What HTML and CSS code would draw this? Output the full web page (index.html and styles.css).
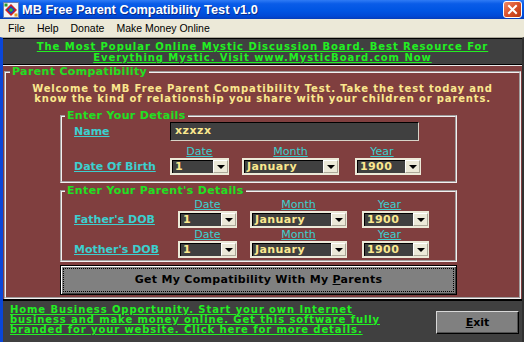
FILE: index.html
```html
<!DOCTYPE html>
<html lang="en">
    <head>
        <meta charset="UTF-8" />
        <title>MB Free Parent Compatibility Test v1.0</title>
        <link rel="stylesheet" href="styles.css">
    </head>

    <body>
        <div class="window">
            <!-- title bar -->
            <div class="titlebar">
                <svg class="app-icon" width="16" height="16" viewBox="0 0 16 16">
                    <rect x="0.5" y="0.5" width="15" height="15" fill="#f4f4f4" stroke="#6a7fb0" />
                    <path d="M8 2 L14 8 L8 14 L2 8 Z" fill="#d02020" />
                    <path d="M8 4 L12 8 L8 12 L4 8 Z" fill="#1a3fc0" />
                    <circle cx="8" cy="8" r="1.8" fill="#30c030" />
                    <rect x="1.5" y="1.5" width="3" height="3" fill="#2a9a2a" />
                    <rect x="11.5" y="11.5" width="3" height="3" fill="#e0a020" />
                </svg>
                <span class="title">MB Free Parent Compatibility Test v1.0</span>
                <span class="close-btn">
                    <svg width="11" height="11" viewBox="0 0 11 11">
                        <path d="M2 2 L9 9 M9 2 L2 9" stroke="#fff" stroke-width="2" stroke-linecap="square" />
                    </svg>
                </span>
            </div>

            <!-- menu -->
            <div class="menubar">
                <span>File</span>
                <span>Help</span>
                <span>Donate</span>
                <span>Make Money Online</span>
            </div>

            <div class="client">
                <div class="banner">
                    <span class="link">The Most Popular Online Mystic Discussion Board. Best Resource For<br />Everything Mystic. Visit www.MysticBoard.com Now</span>
                </div>

                <div class="main">
                    <fieldset class="group outer">
                        <legend>Parent Compatibility</legend>
                        <p class="welcome">
                            Welcome to MB Free Parent Compatibility Test. Take the test today and<br />
                            know the kind of relationship you share with your children or parents.
                        </p>

                        <fieldset class="group inner">
                            <legend>Enter Your Details</legend>
                            <div class="row">
                                <span class="label own">Name</span>
                                <div class="textbox">xzxzx</div>
                            </div>
                            <div class="row heads">
                                <span class="label own"></span>
                                <span class="head c-date">Date</span>
                                <span class="head c-month">Month</span>
                                <span class="head c-year">Year</span>
                            </div>
                            <div class="row">
                                <span class="label own">Date Of Birth</span>
                                <div class="combo c-date"><span>1</span><i></i></div>
                                <div class="combo c-month"><span>January</span><i></i></div>
                                <div class="combo c-year"><span>1900</span><i></i></div>
                            </div>
                        </fieldset>

                        <fieldset class="group inner parents">
                            <legend>Enter Your Parent's Details</legend>
                            <div class="row heads">
                                <span class="label par"></span>
                                <span class="head c-date">Date</span>
                                <span class="head c-month">Month</span>
                                <span class="head c-year">Year</span>
                            </div>
                            <div class="row">
                                <span class="label par">Father's DOB</span>
                                <div class="combo c-date"><span>1</span><i></i></div>
                                <div class="combo c-month"><span>January</span><i></i></div>
                                <div class="combo c-year"><span>1900</span><i></i></div>
                            </div>
                            <div class="row heads">
                                <span class="label par"></span>
                                <span class="head c-date">Date</span>
                                <span class="head c-month">Month</span>
                                <span class="head c-year">Year</span>
                            </div>
                            <div class="row">
                                <span class="label par">Mother's DOB</span>
                                <div class="combo c-date"><span>1</span><i></i></div>
                                <div class="combo c-month"><span>January</span><i></i></div>
                                <div class="combo c-year"><span>1900</span><i></i></div>
                            </div>
                        </fieldset>

                        <button class="go-btn"><span>Get My Compatibility With My <u>P</u>arents</span></button>
                    </fieldset>
                </div>

                <div class="footer">
                    <span class="link promo">Home Business Opportunity. Start your own Internet<br />business and make money online. Get this software fully<br />branded for your website. Click here for more details.</span>
                    <button class="exit-btn"><u>E</u>xit</button>
                </div>
            </div>
        </div>
    </body>
</html>
```

FILE: styles.css
```css
* {
    margin: 0;
    padding: 0;
    box-sizing: border-box;
}

body {
    width: 524px;
    height: 342px;
    overflow: hidden;
    background-color: #404040;
    font-family: 'DejaVu Sans', Verdana, sans-serif;
    font-weight: bold;
    font-size: 11px;
}

.window {
    width: 524px;
    height: 342px;
    display: flex;
    flex-direction: column;
}

/* title bar */
.titlebar {
    height: 19px;
    display: flex;
    align-items: center;
    padding-left: 3px;
    background: linear-gradient(#2f7bf5, #0a5ce8 20%, #0055e3 55%, #0049d6 85%, #063cb8);
}
.app-icon {
    flex: none;
}
.title {
    margin-left: 3px;
    color: #fff;
    font-family: 'Liberation Sans', Arial, sans-serif;
    font-size: 12.8px;
    font-weight: bold;
    text-shadow: 1px 1px 0 #0a2a8a;
}
.close-btn {
    margin-left: auto;
    margin-right: 2px;
    width: 19px;
    height: 17px;
    display: flex;
    align-items: center;
    justify-content: center;
    border: 1px solid #fff;
    border-radius: 3px;
    background: linear-gradient(135deg, #f08a68, #d9502a 50%, #b8360f);
}

/* menu */
.menubar {
    height: 18px;
    display: flex;
    align-items: center;
    padding-left: 2px;
    background-color: #ece9d8;
    font-family: 'Liberation Sans', Arial, sans-serif;
    font-weight: normal;
    font-size: 10.5px;
    color: #000;
}
.menubar span {
    padding: 0 6px;
}

/* client area */
.client {
    flex: 1;
    display: flex;
    flex-direction: column;
    border-left: 3px solid #0a46d8;
    border-right: 2px solid #303030;
    border-top: 1px solid #aca899;
}

.link {
    color: #22f022;
    text-decoration: underline;
}

.banner {
    height: 27px;
    padding-top: 2px;
    border-top: 1px solid #000;
    border-bottom: 1px solid #000;
    background-color: #404040;
    text-align: center;
    font-size: 10px;
    line-height: 11px;
    letter-spacing: 0.95px;
}

.main {
    height: 235px;
    background-color: #803f3f;
    border-top: 1px solid #e8e8e8;
    border-bottom: 1px solid #000;
    padding: 0 1px;
}

/* group boxes */
.group {
    border: 2px groove #f4f0f0;
}
.group legend {
    padding: 0 2px;
    color: #22e022;
    line-height: 12px;
    letter-spacing: 0.35px;
}
.outer {
    height: 233px;
    padding: 0 0 0 4px;
}
.welcome {
    margin-top: 6px;
    margin-right: 4px;
    text-align: center;
    color: #fbe88e;
    font-size: 10px;
    line-height: 10px;
    letter-spacing: 0.85px;
}
.inner {
    width: 397px;
    margin: 6px 0 0 50px;
    padding: 0 0 6px 3px;
}
.parents {
    margin-top: 2px;
    padding-bottom: 2px;
}

.row {
    display: flex;
    align-items: center;
    margin-left: 9px;
}
.label {
    flex: none;
    color: #3ccfcf;
    text-decoration: underline;
}
.label.own {
    width: 96px;
}
.label.par {
    width: 104px;
}
.heads {
    height: 12px;
    line-height: 12px;
    margin-top: 5px;
}
.parents .heads {
    margin-top: 1px;
}
.parents .heads:first-of-type {
    margin-top: 2px;
}
.head {
    flex: none;
    color: #3ccfcf;
    font-weight: normal;
    text-decoration: underline;
    text-align: center;
}
.c-date {
    width: 59px;
}
.c-month {
    width: 97px;
    margin-left: 13px;
}
.c-year {
    width: 66px;
    margin-left: 16px;
}
.parents .c-month {
    margin-left: 13px;
}
.parents .c-year {
    width: 67px;
    margin-left: 15px;
}
.head.c-year {
    padding-right: 12px;
}

.textbox {
    width: 249px;
    height: 19px;
    padding: 2px 0 0 4px;
    background-color: #404040;
    border: 1px solid #000;
    border-right-color: #d8d4c8;
    border-bottom-color: #d8d4c8;
    color: #fbe88e;
    line-height: 12px;
    letter-spacing: 0.5px;
}

.combo {
    flex: none;
    height: 17px;
    display: flex;
    background-color: #404040;
    border: 2px solid #ece9d8;
    border-right-width: 1px;
    box-shadow: inset 1px 1px 0 #000;
}
.combo span {
    flex: 1;
    padding-left: 3px;
    color: #fbe88e;
    line-height: 13px;
    letter-spacing: 0.4px;
}
.combo i {
    width: 15px;
    display: flex;
    align-items: center;
    justify-content: center;
    background-color: #ece9d8;
    border: 1px solid #fff;
    border-right-color: #aca899;
    border-bottom-color: #aca899;
}
.combo i::after {
    content: '';
    border-left: 4px solid transparent;
    border-right: 4px solid transparent;
    border-top: 4px solid #000;
}
.parents .row:not(.heads) {
    height: 17px;
}

.go-btn {
    width: 397px;
    height: 30px;
    margin: 3px 0 0 50px;
    padding: 3px;
    display: block;
    background-color: #808080;
    border: 1px solid #000;
    box-shadow: inset 1px 1px 0 #fff, inset -1px -1px 0 #404040;
    font: inherit;
    color: #000;
    letter-spacing: 0.3px;
}
.go-btn span {
    display: block;
    height: 100%;
    line-height: 22px;
    text-align: center;
    outline: 1px dotted #000;
}

/* bottom bar */
.footer {
    flex: 1;
    display: flex;
    justify-content: space-between;
    align-items: flex-start;
    padding: 4px 3px 0 7px;
    background-color: #404040;
    border-top: 1px solid #000;
}
.promo {
    font-size: 10px;
    line-height: 10px;
    letter-spacing: 0.9px;
}
.exit-btn {
    width: 83px;
    height: 23px;
    margin-top: 6px;
    background-color: #808080;
    border: 1px solid #000;
    border-top-color: #d8d8d8;
    border-left-color: #d8d8d8;
    box-shadow: inset -1px -1px 0 #505050;
    font: inherit;
    color: #000;
}
```
